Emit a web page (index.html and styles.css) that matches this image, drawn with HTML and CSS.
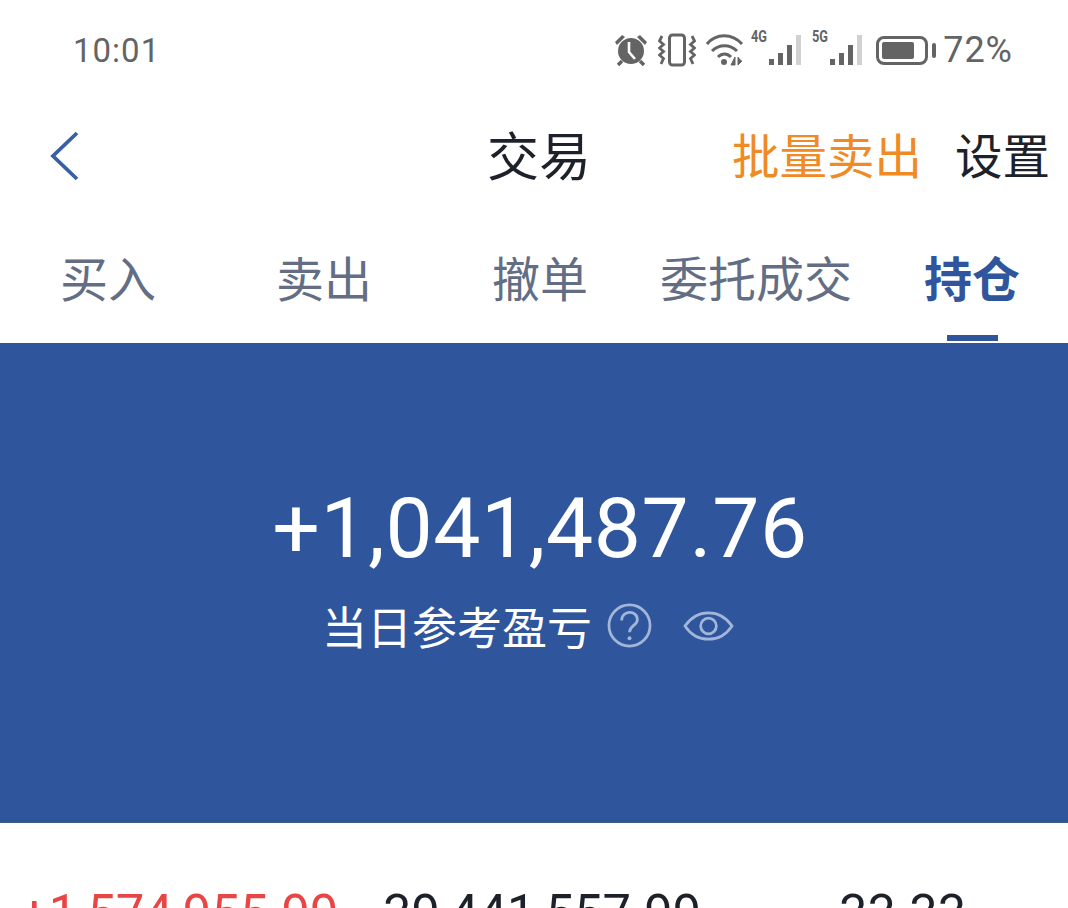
FILE: index.html
```html
<!DOCTYPE html>
<html lang="zh-CN">

<head>
    <meta charset="UTF-8">
    <meta name="viewport" content="width=device-width, initial-scale=1.0">
    <title>交易</title>
    <link rel="stylesheet" href="styles.css">
</head>

<body>
    <div class="phone">
        <div class="status-bar">
            <span class="time">10:01</span>
            <div class="status-icons">
                <svg class="icon-alarm" viewBox="0 0 34 34" width="34" height="34">
                    <circle cx="17" cy="18" r="13" fill="#636463"/>
                    <path d="M1 9 8 2 11 4 3 12ZM33 9 26 2 23 4 31 12Z" fill="#636463"/>
                    <path d="M8 28l-4 4M26 28l4 4" stroke="#636463" stroke-width="3.500" fill="none"/>
                    <path d="M15 9v10l6 7" stroke="#fff" stroke-width="2.600" fill="none"/>
                </svg>
                <svg class="icon-vibrate" viewBox="0 0 38 34" width="38" height="34">
                    <rect x="11.500" y="2" width="15" height="30" rx="3" fill="none" stroke="#636463" stroke-width="3"/>
                    <path d="M4 3 1.500 8l4 3.500-4 3.500 4 3.500-4 3.500 4 3.500L3 31M34 3l2.500 5-4 3.500 4 3.500-4 3.500 4 3.500-4 3.500L35 31" fill="none" stroke="#636463" stroke-width="2.800"/>
                </svg>
                <svg class="icon-wifi" viewBox="0 0 38 34" width="38" height="34">
                    <path d="M1 11C10 0 26 0 36 11M6 18c7-7 18-7 25 0M12 24c4-4 9-4 13 0" fill="none" stroke="#636463" stroke-width="3"/>
                    <circle cx="18" cy="29" r="3" fill="#636463"/>
                    <path d="M29 24v8h-4zM32 24v8l4-4" fill="#636463" stroke="#636463" stroke-width="1"/>
                </svg>
                <div class="signal">
                    <span class="net">4G</span>
                    <div class="bars">
                        <i class="b1"></i><i class="b2"></i><i class="b3"></i><i class="b4 off"></i>
                    </div>
                </div>
                <div class="signal second">
                    <span class="net">5G</span>
                    <div class="bars">
                        <i class="b1"></i><i class="b2"></i><i class="b3"></i><i class="b4 off"></i>
                    </div>
                </div>
                <div class="battery">
                    <div class="battery-body"><div class="battery-fill"></div></div>
                    <div class="battery-cap"></div>
                </div>
                <span class="percent">72%</span>
            </div>
        </div>

        <div class="nav">
            <svg class="back" viewBox="0 0 30 50" width="30" height="50">
                <path d="M27 2 3 25l24 23" fill="none" stroke="#3a60a3" stroke-width="3.800"/>
            </svg>
            <div class="nav-title">交易</div>
            <div class="nav-actions">
                <span class="batch">批量卖出</span>
                <span class="settings">设置</span>
            </div>
        </div>

        <div class="tabs">
            <div class="tab">买入</div>
            <div class="tab">卖出</div>
            <div class="tab">撤单</div>
            <div class="tab">委托成交</div>
            <div class="tab active">持仓</div>
        </div>

        <div class="banner">
            <div class="amount">+1,041,487.76</div>
            <div class="amount-label">
                <span>当日参考盈亏</span>
                <svg class="help" viewBox="0 0 46 46" width="45" height="45">
                    <circle cx="23" cy="23" r="21" fill="none" stroke="#a3b6d9" stroke-width="2.800"/>
                    <path d="M15 18c0-11 16-11 16-1 0 6-8 6-8 13" fill="none" stroke="#a3b6d9" stroke-width="2.800"/>
                    <circle cx="23" cy="36" r="2" fill="#a3b6d9"/>
                </svg>
                <svg class="eye" viewBox="0 0 52 38" width="51" height="38">
                    <path d="M2 19C14 1 38 1 50 19 38 37 14 37 2 19Z" fill="none" stroke="#a3b6d9" stroke-width="2.800"/>
                    <circle cx="26" cy="19" r="8" fill="none" stroke="#a3b6d9" stroke-width="2.800"/>
                </svg>
            </div>
        </div>

        <div class="stats">
            <span class="stat profit">+1,574,955.99</span>
            <span class="stat value">39,441,557.99</span>
            <span class="stat ratio">33.33</span>
        </div>
    </div>
</body>

</html>
```

FILE: styles.css
```css
* {
    margin: 0;
    padding: 0;
    box-sizing: border-box;
}

body {
    background-color: #fff;
    font-family: Roboto, "Noto Sans CJK SC", sans-serif;
}

.phone {
    width: 1068px;
    height: 908px;
    overflow: hidden;
}

/* status bar */
.status-bar {
    height: 100px;
    padding: 0 55px 0 73px;
    display: flex;
    align-items: center;
    justify-content: space-between;
    color: #636463;
}

.time {
    font-size: 33px;
    letter-spacing: 1px;
}

.status-icons {
    display: flex;
    align-items: center;
}

.status-icons svg {
    display: block;
}

.icon-vibrate {
    margin-left: 10px;
}

.icon-wifi {
    margin-left: 10px;
}

.signal {
    position: relative;
    width: 50px;
    height: 34px;
    margin-left: 7px;
    margin-bottom: 4px;
    display: flex;
    justify-content: flex-end;
    align-items: flex-end;
}

.signal.second {
    margin-left: 11px;
}

.net {
    position: absolute;
    left: 0;
    top: -5px;
    font-size: 17px;
    font-weight: 700;
    transform: scaleX(0.75);
    transform-origin: left;
}

.bars {
    display: flex;
    align-items: flex-end;
    gap: 4px;
}

.bars i {
    display: block;
    width: 5px;
    background-color: #636463;
}

.bars .b1 { height: 6px; }
.bars .b2 { height: 12px; }
.bars .b3 { height: 20px; }
.bars .b4 { height: 30px; }

.bars .off {
    background-color: #d3d0d2;
}

.battery {
    display: flex;
    align-items: center;
    gap: 4px;
    margin-left: 14px;
}

.battery-body {
    width: 52px;
    height: 29px;
    border: 3px solid #636463;
    border-radius: 8px;
    padding: 3px;
}

.battery-fill {
    width: 80%;
    height: 100%;
    border-radius: 2px;
    background-color: #636463;
}

.battery-cap {
    width: 4px;
    height: 15px;
    border-radius: 2px;
    background-color: #636463;
}

.percent {
    font-size: 36px;
    letter-spacing: 1px;
    margin-left: 7px;
}

/* nav */
.nav {
    position: relative;
    height: 115px;
    padding: 0 18px 8px 50px;
    display: flex;
    align-items: center;
    justify-content: space-between;
}

.back {
    margin-top: 4px;
}

.nav-title {
    position: absolute;
    left: 10px;
    right: 0;
    text-align: center;
    font-size: 52px;
    color: #1d2129;
}

.nav-actions {
    display: flex;
    gap: 33px;
    font-size: 47.5px;
}

.batch {
    color: #f08a24;
}

.settings {
    color: #1d2129;
}

/* tabs */
.tabs {
    height: 128px;
    display: grid;
    grid-template-columns: repeat(5, 216px);
}

.tab {
    position: relative;
    padding-top: 26px;
    text-align: center;
    font-size: 48px;
    color: #636e85;
    white-space: nowrap;
}

.tab.active {
    color: #2f569c;
    font-weight: 700;
}

.tab.active::after {
    content: "";
    position: absolute;
    left: 83px;
    bottom: 2px;
    width: 51px;
    height: 6px;
    background-color: #2f569c;
}

/* banner */
.banner {
    height: 480px;
    background-color: #2f569c;
    border-bottom: 1px solid #3a5c80;
    color: #fff;
    padding-top: 136px;
    display: flex;
    flex-direction: column;
    align-items: center;
}

.amount {
    margin-left: 12px;
    font-size: 84px;
    line-height: 100px;
    letter-spacing: 0.6px;
}

.amount-label {
    margin-top: 14px;
    margin-right: 12px;
    display: flex;
    align-items: center;
    font-size: 45px;
}

.help {
    margin-left: 15px;
}

.eye {
    margin-left: 31px;
}

/* stats row */
.stats {
    display: grid;
    grid-template-columns: 363px 456px 1fr;
    padding: 61px 0 0 20px;
    font-size: 52px;
    line-height: 60px;
    color: #1d2129;
    white-space: nowrap;
}

.stat {
    display: block;
    transform: scaleX(0.975);
    transform-origin: left;
}

.profit {
    color: #e84545;
}
```
